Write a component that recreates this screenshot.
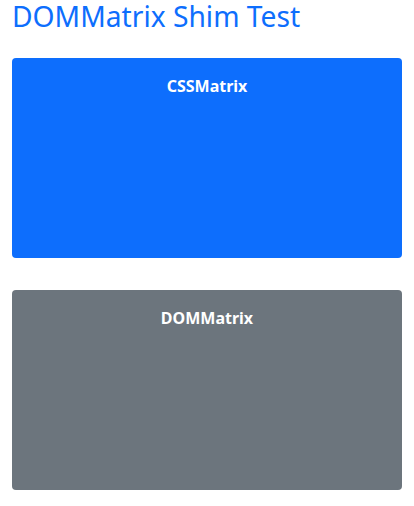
<main>
  <h1>DOMMatrix Shim Test</h1>
  <div class="boxes">
    <section class="box primary"><strong>CSSMatrix</strong></section>
    <section class="box secondary"><strong>DOMMatrix</strong></section>
  </div>
</main>

<style>
  :global(body) {
    margin: 0;
    background: #fff;
  }

  main {
    padding: 0 12px 16px;
    font-family: "Noto Sans", sans-serif;
    font-size: 16px;
    line-height: 24px;
  }

  h1 {
    margin: 0 0 26px;
    color: #0d6efd;
    font-size: calc(22px + 1.5vw);
    font-weight: 400;
    line-height: 32px;
  }

  .boxes {
    display: flex;
    flex-direction: column;
    gap: 32px;
  }

  .box {
    box-sizing: border-box;
    min-height: 200px;
    padding: 16px;
    border-radius: 4px;
    color: #fff;
    text-align: center;
  }

  .primary {
    background: #0d6efd;
  }

  .secondary {
    background: #6c757d;
  }

  strong {
    font-weight: 700;
  }
</style>
